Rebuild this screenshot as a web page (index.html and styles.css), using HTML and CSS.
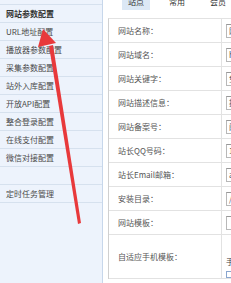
FILE: index.html
```html
<!DOCTYPE html>
<html lang="zh-CN">
<head>
<meta charset="utf-8">
<link rel="stylesheet" href="styles.css">
</head>
<body>
<div class="page">
  <aside class="side">
    <div class="side-top"></div>
    <div class="item head">网站参数配置</div>
    <div class="item">URL地址配置</div>
    <div class="item">播放器参数配置</div>
    <div class="item">采集参数配置</div>
    <div class="item">站外入库配置</div>
    <div class="item">开放API配置</div>
    <div class="item">整合登录配置</div>
    <div class="item">在线支付配置</div>
    <div class="item">微信对接配置</div>
    <div class="item"></div>
    <div class="item">定时任务管理</div>
  </aside>
  <main class="main">
    <nav class="tabs">
      <span class="tab active">站点</span>
      <span class="tab">常用</span>
      <span class="tab">会员</span>
    </nav>
    <div class="form">
      <div class="row"><div class="lab">网站名称：</div><div class="val"><span class="inp">网站</span></div></div>
      <div class="row"><div class="lab">网站域名：</div><div class="val"><span class="inp">http</span></div></div>
      <div class="row"><div class="lab">网站关键字：</div><div class="val"><span class="inp">免费</span></div></div>
      <div class="row"><div class="lab">网站描述信息：</div><div class="val"><span class="inp">提供</span></div></div>
      <div class="row"><div class="lab">网站备案号：</div><div class="val"><span class="inp">闽</span></div></div>
      <div class="row"><div class="lab">站长QQ号码：</div><div class="val"><span class="inp">1</span></div></div>
      <div class="row"><div class="lab">站长Email邮箱：</div><div class="val"><span class="inp">a</span></div></div>
      <div class="row"><div class="lab">安装目录：</div><div class="val"><span class="inp">/</span></div></div>
      <div class="row"><div class="lab">网站模板：</div><div class="val"><span class="inp"></span></div></div>
      <div class="row tall"><div class="lab">自适应手机模板：</div><div class="val stack"><span class="note">手机模板</span><span class="inp blue"></span></div></div>
    </div>
  </main>
  <svg class="arrow" width="231" height="283" viewBox="0 0 231 283">
    <path d="M78 224 L81 223 L53 45 L49 46 Z" fill="#e8393b"/>
    <path d="M43 29 L38 47 L56 43 Z" fill="#e8393b"/>
  </svg>
</div>
</body>
</html>
```
FILE: styles.css
```css
* { box-sizing: border-box; }
html, body { margin: 0; padding: 0; }
body {
  width: 231px;
  height: 283px;
  overflow: hidden;
  background: #fff;
  font-family: "Noto Sans CJK SC", "Liberation Sans", sans-serif;
  font-size: 8px;
  color: #444;
}
.page {
  position: relative;
  display: flex;
  width: 231px;
  height: 283px;
}
.side {
  flex: 0 0 103px;
  height: 283px;
  background: #edf3fc;
  border-right: 1px solid #c7d7eb;
}
.side-top {
  height: 5px;
  border-bottom: 1px solid #d6e1ee;
}
.item {
  height: 18px;
  line-height: 17px;
  padding-left: 6px;
  border-bottom: 1px solid #d6e1ee;
  color: #4a4a4a;
  white-space: nowrap;
}
.item.head {
  font-weight: bold;
  color: #333;
}
.main {
  flex: 0 0 auto;
  width: 200px;
  margin-left: 5px;
}
.tabs {
  display: flex;
  gap: 13px;
  height: 18px;
  padding-left: 14px;
}
.tab {
  margin-top: -3px;
  height: 13px;
  line-height: 10px;
  padding: 0 6px 3px;
  color: #333;
}
.tab.active {
  background: #dce8f5;
}
.form {
  border-left: 1px solid #d0d0d0;
  border-top: 1px solid #e2e2e2;
}
.row {
  display: flex;
  height: 24px;
  border-bottom: 1px solid #e2e2e2;
}
.row.tall {
  height: 44px;
}
.lab {
  flex: 0 0 113px;
  border-right: 1px solid #e2e2e2;
  padding-left: 9px;
  display: flex;
  align-items: center;
  color: #555;
  white-space: nowrap;
}
.val {
  flex: 1;
  padding-left: 4px;
  display: flex;
  align-items: center;
}
.val.stack {
  flex-direction: column;
  align-items: flex-start;
  padding-top: 22px;
}
.note {
  line-height: 10px;
  color: #444;
  white-space: nowrap;
}
.inp {
  display: block;
  width: 120px;
  height: 14px;
  line-height: 12px;
  padding-left: 2px;
  border: 1px solid #b8b8b8;
  border-top-color: #999;
  color: #555;
  white-space: nowrap;
  overflow: hidden;
}
.inp.blue {
  margin-top: 4px;
  border-color: #8aa6cf;
}
.arrow {
  position: absolute;
  left: 0;
  top: 0;
  pointer-events: none;
}
```
